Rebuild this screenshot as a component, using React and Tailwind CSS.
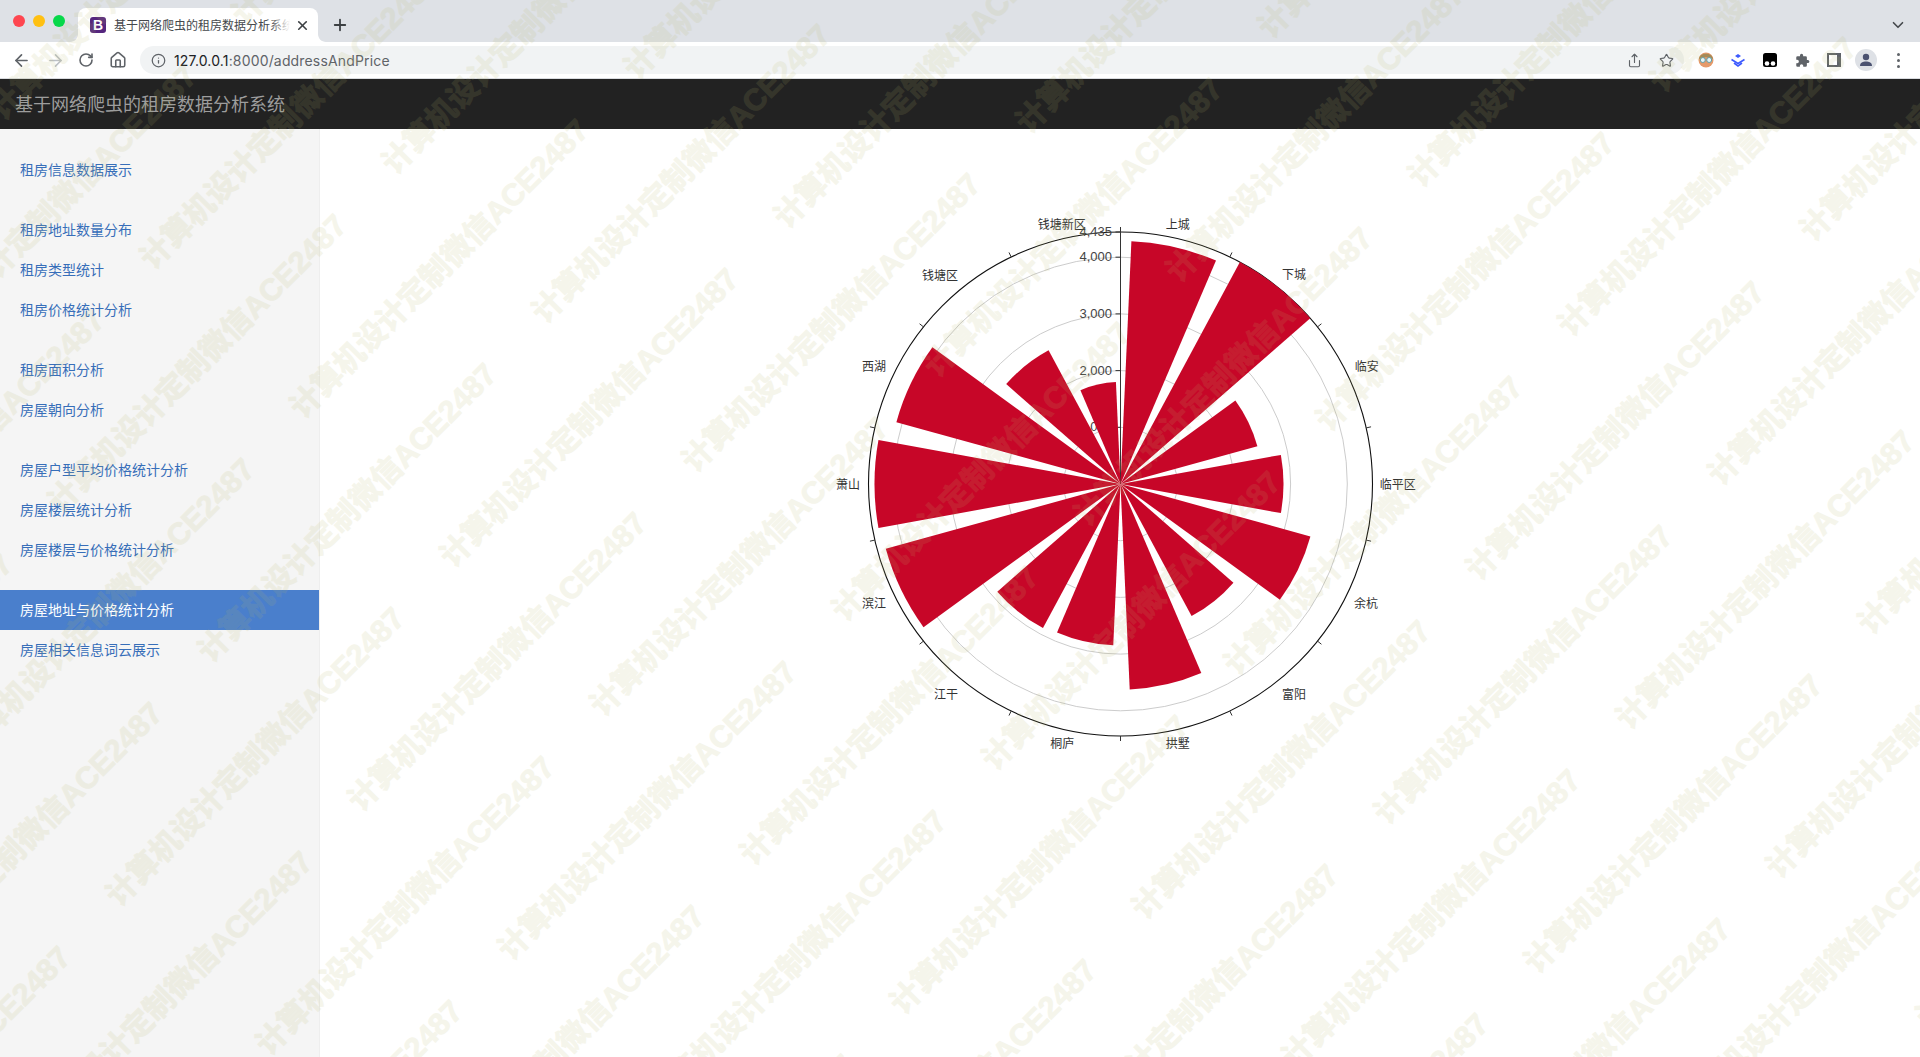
import { ArrowLeft, ArrowRight, RotateCw, Home, Info, Share, Star, Plus, X, ChevronDown } from "lucide-react"

const CJK = "font-['Noto_Sans_CJK_SC','Liberation_Sans',sans-serif]"

const menu = [
  ["租房信息数据展示"],
  ["租房地址数量分布", "租房类型统计", "租房价格统计分析"],
  ["租房面积分析", "房屋朝向分析"],
  ["房屋户型平均价格统计分析", "房屋楼层统计分析", "房屋楼层与价格统计分析"],
  ["房屋地址与价格统计分析", "房屋相关信息词云展示"],
]

const CX = 1120.5
const CY = 484
const R = 252
const STEP = 360 / 14
const bars = [243, 252, 142, 163, 197, 150, 205.6, 161.5, 163.6, 243.5, 246, 232.5, 151.8, 102]
const labels = [
  ["上城", 1177.7, 224],
  ["下城", 1294, 274],
  ["临安", 1366.7, 366],
  ["临平区", 1397.7, 483.5],
  ["余杭", 1366, 602.7],
  ["富阳", 1294, 693.7],
  ["拱墅", 1177.7, 743.3],
  ["桐庐", 1062.3, 743.3],
  ["江干", 946, 693.7],
  ["滨江", 874, 602.7],
  ["萧山", 848, 483.5],
  ["西湖", 874, 365.7],
  ["钱塘区", 940, 274.7],
  ["钱塘新区", 1061.7, 224],
]
const radial = [
  ["1,000", 56.7],
  ["2,000", 113.4],
  ["3,000", 170.1],
  ["4,000", 226.8],
  ["4,435", 252],
]

function pt(deg, r) {
  const a = (deg * Math.PI) / 180
  return [CX + r * Math.sin(a), CY - r * Math.cos(a)]
}

function sector(i, r) {
  const [x1, y1] = pt(i * STEP + STEP * 0.1, r)
  const [x2, y2] = pt(i * STEP + STEP * 0.9, r)
  return `M${CX} ${CY}L${x1} ${y1}A${r} ${r} 0 0 1 ${x2} ${y2}Z`
}

function RoseChart() {
  return (
    <svg viewBox="820 184 600 600" className="w-[600px] h-[600px] font-['Liberation_Sans','Noto_Sans_CJK_SC',sans-serif]">
      {radial.slice(0, 4).map(([, r]) => (
        <circle key={r} cx={CX} cy={CY} r={r} fill="none" stroke="#ccc" />
      ))}
      <circle cx={CX} cy={CY} r={R} fill="none" stroke="#111" strokeWidth="1.1" />
      {labels.map((_, i) => {
        const [x1, y1] = pt(i * STEP, R)
        const [x2, y2] = pt(i * STEP, R + 5)
        return <line key={i} x1={x1} y1={y1} x2={x2} y2={y2} stroke="#333" />
      })}
      <line x1={CX} y1={CY} x2={CX} y2={CY - R} stroke="#333" />
      {radial.map(([t, r]) => (
        <g key={t}>
          <line x1={CX} y1={CY - r} x2={CX - 5} y2={CY - r} stroke="#333" />
          <text x={CX - 8.5} y={CY - r + 4} textAnchor="end" fontSize="13" fill="#444">{t}</text>
        </g>
      ))}
      {bars.map((r, i) => (
        <path key={i} d={sector(i, r)} fill="#c70628" />
      ))}
      {labels.map(([t, x, y]) => (
        <text key={t} x={x} y={y + 5} textAnchor="middle" fontSize="12" fill="#333" className="font-['Noto_Sans_CJK_SC',sans-serif]">{t}</text>
      ))}
    </svg>
  )
}

function Watermarks() {
  const items = []
  for (let i = -8; i < 10; i++) {
    for (let j = -6; j < 10; j++) {
      const x = 364 + i * 150 + j * 242
      const y = 794 + i * 149 - j * 95
      if (x < -350 || x > 1950 || y < -30 || y > 1400) continue
      items.push([x, y])
    }
  }
  return (
    <div className="absolute inset-0 overflow-hidden pointer-events-none opacity-[0.13]">
      {items.map(([x, y]) => (
        <span
          key={`${x}-${y}`}
          className="absolute whitespace-nowrap origin-left -rotate-45 text-[30.5px] leading-[30px] font-bold text-[#b8b86a] [-webkit-text-stroke:1px_#b8b86a] font-['Liberation_Sans','Noto_Sans_CJK_SC',sans-serif]"
          style={{ left: x - 10.6, top: y + 10.6 - 15 }}
        >
          计算机设计定制微信ACE2487
        </span>
      ))}
    </div>
  )
}

function TabBar() {
  return (
    <div className="h-[42px] bg-[#dee1e6] flex items-end relative">
      <div className="absolute left-[13px] top-[15px] flex gap-2">
        <span className="w-3 h-3 rounded-full bg-[#fe4650]" />
        <span className="w-3 h-3 rounded-full bg-[#ffc012]" />
        <span className="w-3 h-3 rounded-full bg-[#07d84a]" />
      </div>
      <div className="relative ml-[78px] w-[240px] h-[34px] bg-white rounded-t-lg flex items-center pl-3">
        <svg className="absolute -left-2 bottom-0" width="8" height="8" viewBox="0 0 8 8"><path d="M8 0V8H0C4.4 8 8 4.4 8 0Z" fill="#fff" /></svg>
        <svg className="absolute -right-2 bottom-0" width="8" height="8" viewBox="0 0 8 8"><path d="M0 0V8H8C3.6 8 0 4.4 0 0Z" fill="#fff" /></svg>
        <span className="w-4 h-4 rounded-[3px] bg-[#55267e] text-white text-[14px] leading-4 font-bold text-center font-['Liberation_Sans',sans-serif]">B</span>
        <div className={`relative ml-2 w-[176px] overflow-hidden whitespace-nowrap text-[12px] text-[#45484c] ${CJK}`}>
          基于网络爬虫的租房数据分析系统
          <span className="absolute right-0 top-0 bottom-0 w-5 bg-gradient-to-r from-transparent to-white" />
        </div>
        <X size={15} strokeWidth={2.6} className="ml-[5px] text-[#3c4043]" />
      </div>
      <Plus size={18} strokeWidth={2.4} className="ml-[13px] mb-[8px] text-[#3c4043]" />
      <ChevronDown size={18} strokeWidth={2.2} className="absolute right-[13px] top-[16px] text-[#45484c]" />
    </div>
  )
}

function Toolbar() {
  return (
    <div className="h-[37px] bg-white border-b border-[#dadce0] flex items-center text-[#5f6368]">
      <ArrowLeft size={19} strokeWidth={2.1} className="ml-[12px]" />
      <ArrowRight size={19} strokeWidth={2.1} className="ml-[15px] text-[#bdc1c6]" />
      <RotateCw size={16} strokeWidth={2.4} className="ml-[13px]" />
      <Home size={18} strokeWidth={2.1} className="ml-[15px]" />
      <div className="ml-[13px] w-[1544px] h-7 rounded-full bg-[#f1f3f4] flex items-center">
        <Info size={15} strokeWidth={2} className="ml-[11px]" />
        <span className="ml-[8px] text-[14px] tracking-[0.16px] text-[#5f6368] font-['Inter',sans-serif]">
          <span className="text-[#202124]">127.0.0.1</span>:8000/addressAndPrice
        </span>
        <Share size={15} strokeWidth={1.8} className="ml-auto" />
        <Star size={15} strokeWidth={1.8} className="ml-[17px] mr-[10px]" />
      </div>
      <svg className="ml-[14px]" width="16" height="16" viewBox="0 0 16 16">
        <circle cx="8" cy="8" r="7.500" fill="#e59a6a" />
        <path d="M1 7C1.500 0 14.500 0 15 7L8 5Z" fill="#a58a58" />
        <circle cx="4.800" cy="8" r="2.500" fill="#e6f3f6" stroke="#5e9ea8" />
        <circle cx="11.200" cy="8" r="2.500" fill="#e6f3f6" stroke="#5e9ea8" />
      </svg>
      <svg className="ml-4" width="16" height="16" viewBox="0 0 16 16" fill="none" stroke="#3d5afe" strokeWidth="1.6">
        <path d="M1.500 7.500L8 11.500L14.500 7.500" />
        <path d="M4 11L8 14L12 11" />
        <path d="M5 4L8 6L11 4L8 2Z" fill="#3d5afe" stroke="none" />
      </svg>
      <svg className="ml-[17px]" width="14" height="14" viewBox="0 0 14 14">
        <rect width="14" height="14" rx="2.500" fill="#000" />
        <circle cx="4" cy="10.500" r="2.300" fill="#fff" />
        <circle cx="10" cy="10.500" r="2.300" fill="#fff" />
      </svg>
      <svg className="ml-[18px]" width="15" height="15" viewBox="0 0 24 24" fill="#5f6368">
        <path d="M20.500 11H19V7a2 2 0 0 0-2-2h-4V3.500a2.500 2.500 0 0 0-5 0V5H4a2 2 0 0 0-2 2v3.800h1.500a2.700 2.700 0 0 1 0 5.400H2V20a2 2 0 0 0 2 2h3.800v-1.500a2.700 2.700 0 0 1 5.400 0V22H17a2 2 0 0 0 2-2v-4h1.500a2.500 2.500 0 0 0 0-5Z" />
      </svg>
      <div className="ml-[17px] w-[14px] h-[14px] bg-[#5f6368] p-[2px] pr-[4px]">
        <div className="w-full h-full bg-white" />
      </div>
      <div className="ml-[14px] w-[22px] h-[22px] rounded-full bg-[#dee1e6] flex items-center justify-center">
        <svg width="14" height="14" viewBox="0 0 14 14" fill="#4a5170">
          <circle cx="7" cy="4" r="3.200" />
          <path d="M1 13C1 9.500 4 8.500 7 8.500S13 9.500 13 13Z" />
        </svg>
      </div>
      <div className="ml-[20px] flex flex-col gap-[3px]">
        <span className="w-[3px] h-[3px] rounded-full bg-[#5f6368]" />
        <span className="w-[3px] h-[3px] rounded-full bg-[#5f6368]" />
        <span className="w-[3px] h-[3px] rounded-full bg-[#5f6368]" />
      </div>
    </div>
  )
}

function Sidebar() {
  return (
    <aside className={`w-[320px] shrink-0 bg-[#f5f5f5] border-r border-[#eee] pt-[21px] text-[14px] ${CJK}`}>
      {menu.map((group, i) => (
        <ul key={i} className="mb-5">
          {group.map((item) => {
            const active = item === "房屋地址与价格统计分析"
            return (
              <li key={item}>
                <a
                  href="#"
                  className={`block h-10 leading-[38px] pl-5 ${active ? "bg-[#4a7fcc] text-white" : "text-[#376eb9]"}`}
                >
                  {item}
                </a>
              </li>
            )
          })}
        </ul>
      ))}
    </aside>
  )
}

export default function App() {
  return (
    <div className="relative w-full h-screen overflow-hidden bg-white flex flex-col">
      <TabBar />
      <Toolbar />
      <header className={`h-[50px] shrink-0 bg-[#222] flex items-center pl-[15px] pb-[2px] text-[18px] text-[#9d9d9d] ${CJK}`}>
        基于网络爬虫的租房数据分析系统
      </header>
      <div className="flex flex-1 min-h-0">
        <Sidebar />
        <main className="flex-1 flex justify-center pt-[55px]">
          <RoseChart />
        </main>
      </div>
      <Watermarks />
    </div>
  )
}
